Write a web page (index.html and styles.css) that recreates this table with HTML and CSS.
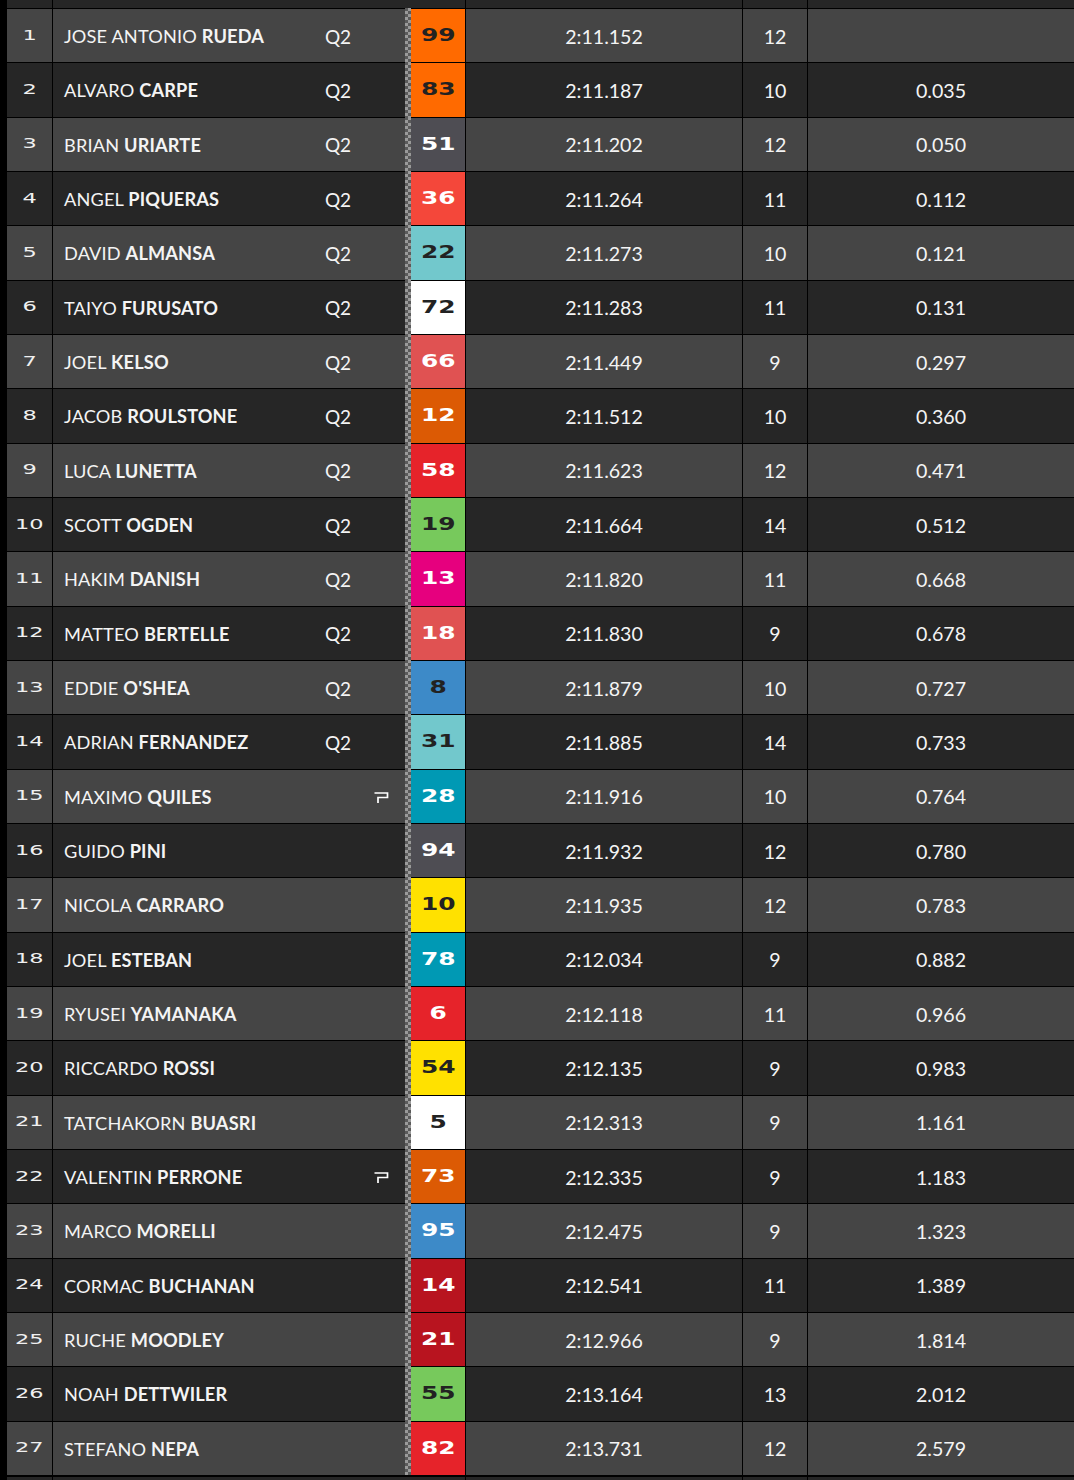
FILE: index.html
```html
<!DOCTYPE html>
<html lang="en">
<head>
<meta charset="utf-8">
<title>Timing</title>
<link rel="stylesheet" href="styles.css">
</head>
<body>
<div class="board">
  <div class="row dark top-cut"><div class="c pos"></div><div class="c name"></div><div class="c blank"></div><div class="c badge"></div><div class="c time"></div><div class="c laps"></div><div class="c gap"></div></div>

  <div class="row light"><div class="c pos"><span class="pn">1</span></div><div class="c name"><span class="nm">JOSE ANTONIO <b>RUEDA</b></span><span class="q">Q2</span><span class="pf"></span></div><div class="stripe"></div><div class="c badge orange"><span class="bn">99</span></div><div class="c time">2:11.152</div><div class="c laps">12</div><div class="c gap"></div></div>
  <div class="row dark"><div class="c pos"><span class="pn">2</span></div><div class="c name"><span class="nm">ALVARO <b>CARPE</b></span><span class="q">Q2</span><span class="pf"></span></div><div class="stripe"></div><div class="c badge orange"><span class="bn">83</span></div><div class="c time">2:11.187</div><div class="c laps">10</div><div class="c gap">0.035</div></div>
  <div class="row light"><div class="c pos"><span class="pn">3</span></div><div class="c name"><span class="nm">BRIAN <b>URIARTE</b></span><span class="q">Q2</span><span class="pf"></span></div><div class="stripe"></div><div class="c badge grey"><span class="bn">51</span></div><div class="c time">2:11.202</div><div class="c laps">12</div><div class="c gap">0.050</div></div>
  <div class="row dark"><div class="c pos"><span class="pn">4</span></div><div class="c name"><span class="nm">ANGEL <b>PIQUERAS</b></span><span class="q">Q2</span><span class="pf"></span></div><div class="stripe"></div><div class="c badge redorange"><span class="bn">36</span></div><div class="c time">2:11.264</div><div class="c laps">11</div><div class="c gap">0.112</div></div>
  <div class="row light"><div class="c pos"><span class="pn">5</span></div><div class="c name"><span class="nm">DAVID <b>ALMANSA</b></span><span class="q">Q2</span><span class="pf"></span></div><div class="stripe"></div><div class="c badge lteal"><span class="bn">22</span></div><div class="c time">2:11.273</div><div class="c laps">10</div><div class="c gap">0.121</div></div>
  <div class="row dark"><div class="c pos"><span class="pn">6</span></div><div class="c name"><span class="nm">TAIYO <b>FURUSATO</b></span><span class="q">Q2</span><span class="pf"></span></div><div class="stripe"></div><div class="c badge white"><span class="bn">72</span></div><div class="c time">2:11.283</div><div class="c laps">11</div><div class="c gap">0.131</div></div>
  <div class="row light"><div class="c pos"><span class="pn">7</span></div><div class="c name"><span class="nm">JOEL <b>KELSO</b></span><span class="q">Q2</span><span class="pf"></span></div><div class="stripe"></div><div class="c badge coral"><span class="bn">66</span></div><div class="c time">2:11.449</div><div class="c laps">9</div><div class="c gap">0.297</div></div>
  <div class="row dark"><div class="c pos"><span class="pn">8</span></div><div class="c name"><span class="nm">JACOB <b>ROULSTONE</b></span><span class="q">Q2</span><span class="pf"></span></div><div class="stripe"></div><div class="c badge dorange"><span class="bn">12</span></div><div class="c time">2:11.512</div><div class="c laps">10</div><div class="c gap">0.360</div></div>
  <div class="row light"><div class="c pos"><span class="pn">9</span></div><div class="c name"><span class="nm">LUCA <b>LUNETTA</b></span><span class="q">Q2</span><span class="pf"></span></div><div class="stripe"></div><div class="c badge red"><span class="bn">58</span></div><div class="c time">2:11.623</div><div class="c laps">12</div><div class="c gap">0.471</div></div>
  <div class="row dark"><div class="c pos"><span class="pn">10</span></div><div class="c name"><span class="nm">SCOTT <b>OGDEN</b></span><span class="q">Q2</span><span class="pf"></span></div><div class="stripe"></div><div class="c badge green"><span class="bn">19</span></div><div class="c time">2:11.664</div><div class="c laps">14</div><div class="c gap">0.512</div></div>
  <div class="row light"><div class="c pos"><span class="pn">11</span></div><div class="c name"><span class="nm">HAKIM <b>DANISH</b></span><span class="q">Q2</span><span class="pf"></span></div><div class="stripe"></div><div class="c badge magenta"><span class="bn">13</span></div><div class="c time">2:11.820</div><div class="c laps">11</div><div class="c gap">0.668</div></div>
  <div class="row dark"><div class="c pos"><span class="pn">12</span></div><div class="c name"><span class="nm">MATTEO <b>BERTELLE</b></span><span class="q">Q2</span><span class="pf"></span></div><div class="stripe"></div><div class="c badge coral"><span class="bn">18</span></div><div class="c time">2:11.830</div><div class="c laps">9</div><div class="c gap">0.678</div></div>
  <div class="row light"><div class="c pos"><span class="pn">13</span></div><div class="c name"><span class="nm">EDDIE <b>O'SHEA</b></span><span class="q">Q2</span><span class="pf"></span></div><div class="stripe"></div><div class="c badge blue dk"><span class="bn">8</span></div><div class="c time">2:11.879</div><div class="c laps">10</div><div class="c gap">0.727</div></div>
  <div class="row dark"><div class="c pos"><span class="pn">14</span></div><div class="c name"><span class="nm">ADRIAN <b>FERNANDEZ</b></span><span class="q">Q2</span><span class="pf"></span></div><div class="stripe"></div><div class="c badge lteal"><span class="bn">31</span></div><div class="c time">2:11.885</div><div class="c laps">14</div><div class="c gap">0.733</div></div>
  <div class="row light"><div class="c pos"><span class="pn">15</span></div><div class="c name"><span class="nm">MAXIMO <b>QUILES</b></span><span class="q"></span><span class="pf"><svg class="picon" width="15" height="11" viewBox="0 0 15 11"><path d="M4 11 V5.5 H13.5 V1 H0.5" fill="none" stroke="#fff" stroke-width="1.7"/></svg></span></div><div class="stripe"></div><div class="c badge teal"><span class="bn">28</span></div><div class="c time">2:11.916</div><div class="c laps">10</div><div class="c gap">0.764</div></div>
  <div class="row dark"><div class="c pos"><span class="pn">16</span></div><div class="c name"><span class="nm">GUIDO <b>PINI</b></span><span class="q"></span><span class="pf"></span></div><div class="stripe"></div><div class="c badge grey"><span class="bn">94</span></div><div class="c time">2:11.932</div><div class="c laps">12</div><div class="c gap">0.780</div></div>
  <div class="row light"><div class="c pos"><span class="pn">17</span></div><div class="c name"><span class="nm">NICOLA <b>CARRARO</b></span><span class="q"></span><span class="pf"></span></div><div class="stripe"></div><div class="c badge yellow"><span class="bn">10</span></div><div class="c time">2:11.935</div><div class="c laps">12</div><div class="c gap">0.783</div></div>
  <div class="row dark"><div class="c pos"><span class="pn">18</span></div><div class="c name"><span class="nm">JOEL <b>ESTEBAN</b></span><span class="q"></span><span class="pf"></span></div><div class="stripe"></div><div class="c badge teal"><span class="bn">78</span></div><div class="c time">2:12.034</div><div class="c laps">9</div><div class="c gap">0.882</div></div>
  <div class="row light"><div class="c pos"><span class="pn">19</span></div><div class="c name"><span class="nm">RYUSEI <b>YAMANAKA</b></span><span class="q"></span><span class="pf"></span></div><div class="stripe"></div><div class="c badge red"><span class="bn">6</span></div><div class="c time">2:12.118</div><div class="c laps">11</div><div class="c gap">0.966</div></div>
  <div class="row dark"><div class="c pos"><span class="pn">20</span></div><div class="c name"><span class="nm">RICCARDO <b>ROSSI</b></span><span class="q"></span><span class="pf"></span></div><div class="stripe"></div><div class="c badge yellow"><span class="bn">54</span></div><div class="c time">2:12.135</div><div class="c laps">9</div><div class="c gap">0.983</div></div>
  <div class="row light"><div class="c pos"><span class="pn">21</span></div><div class="c name"><span class="nm">TATCHAKORN <b>BUASRI</b></span><span class="q"></span><span class="pf"></span></div><div class="stripe"></div><div class="c badge white"><span class="bn">5</span></div><div class="c time">2:12.313</div><div class="c laps">9</div><div class="c gap">1.161</div></div>
  <div class="row dark"><div class="c pos"><span class="pn">22</span></div><div class="c name"><span class="nm">VALENTIN <b>PERRONE</b></span><span class="q"></span><span class="pf"><svg class="picon" width="15" height="11" viewBox="0 0 15 11"><path d="M4 11 V5.5 H13.5 V1 H0.5" fill="none" stroke="#fff" stroke-width="1.7"/></svg></span></div><div class="stripe"></div><div class="c badge dorange"><span class="bn">73</span></div><div class="c time">2:12.335</div><div class="c laps">9</div><div class="c gap">1.183</div></div>
  <div class="row light"><div class="c pos"><span class="pn">23</span></div><div class="c name"><span class="nm">MARCO <b>MORELLI</b></span><span class="q"></span><span class="pf"></span></div><div class="stripe"></div><div class="c badge blue"><span class="bn">95</span></div><div class="c time">2:12.475</div><div class="c laps">9</div><div class="c gap">1.323</div></div>
  <div class="row dark"><div class="c pos"><span class="pn">24</span></div><div class="c name"><span class="nm">CORMAC <b>BUCHANAN</b></span><span class="q"></span><span class="pf"></span></div><div class="stripe"></div><div class="c badge dred"><span class="bn">14</span></div><div class="c time">2:12.541</div><div class="c laps">11</div><div class="c gap">1.389</div></div>
  <div class="row light"><div class="c pos"><span class="pn">25</span></div><div class="c name"><span class="nm">RUCHE <b>MOODLEY</b></span><span class="q"></span><span class="pf"></span></div><div class="stripe"></div><div class="c badge dred"><span class="bn">21</span></div><div class="c time">2:12.966</div><div class="c laps">9</div><div class="c gap">1.814</div></div>
  <div class="row dark"><div class="c pos"><span class="pn">26</span></div><div class="c name"><span class="nm">NOAH <b>DETTWILER</b></span><span class="q"></span><span class="pf"></span></div><div class="stripe"></div><div class="c badge green"><span class="bn">55</span></div><div class="c time">2:13.164</div><div class="c laps">13</div><div class="c gap">2.012</div></div>
  <div class="row light"><div class="c pos"><span class="pn">27</span></div><div class="c name"><span class="nm">STEFANO <b>NEPA</b></span><span class="q"></span><span class="pf"></span></div><div class="stripe"></div><div class="c badge red"><span class="bn">82</span></div><div class="c time">2:13.731</div><div class="c laps">12</div><div class="c gap">2.579</div></div>

  <div class="row dark end"><div class="c pos"></div><div class="c name"></div><div class="c blank"></div><div class="c badge"></div><div class="c time"></div><div class="c laps"></div><div class="c gap"></div></div>
</div>
</body>
</html>
```

FILE: styles.css
```css
html, body {
  margin: 0;
  padding: 0;
  background: #000;
}
body {
  height: 1480px;
  overflow: hidden;
  font-family: "Lato", "Open Sans", "Liberation Sans", sans-serif;
  color: #f4f4f4;
}
.board {
  padding-left: 7px;
  display: flex;
  flex-direction: column;
}
.row {
  display: grid;
  grid-template-columns: 45px 353px 6px 54px 277px 65px 267px;
  height: 54.333px;
}
.row.top-cut { height: 8px; }
.row.end { height: 40px; }
.row.end .c { border-top-width: 2px; }
.light { background: #454545; }
.dark { background: #262626; }
.c {
  box-sizing: border-box;
  border-top: 1px solid #000;
  display: flex;
  align-items: center;
  justify-content: center;
  min-width: 0;
}
.top-cut .c { border-top: none; }
.name, .time, .laps, .gap { border-left: 1px solid #000; }
.name {
  justify-content: flex-start;
  padding-left: 11px;
  font-size: 18.2px;
  letter-spacing: 0.15px;
  padding-top: 1px;
}
.nm { flex: 1; white-space: nowrap; }
.nm b { font-weight: 700; }
.q {
  width: 40px;
  text-align: center;
  font-size: 19px;
  letter-spacing: 0;
}
.pf {
  width: 45px;
  margin-right: 2px;
  display: flex;
  justify-content: center;
  align-items: center;
}
.picon { display: block; margin-top: 1px; margin-left: 1px; }
.stripe {
  background: repeating-conic-gradient(#9a9a9a 0 25%, #5a5a5a 0 50%) 0 0 / 6px 6px;
}
.top-cut .stripe, .end .stripe { background: none; }
.pn {
  display: inline-block;
  font-family: "DejaVu Sans", sans-serif;
  font-size: 14.5px;
  transform: scaleX(1.55);
  margin-top: -2px;
  color: #f0f0f0;
}
.badge { color: #fff; }
.bn {
  display: inline-block;
  font-family: "DejaVu Sans", sans-serif;
  font-weight: 700;
  font-size: 17.5px;
  transform: scaleX(1.42);
  margin-top: -1px;
}
.time, .laps, .gap {
  font-size: 19.6px;
  padding-top: 1px;
}
.orange { background: #ff6a00; color: #222; }
.grey { background: #4e4d53; }
.redorange { background: #f4473a; }
.lteal { background: #72c8cc; color: #222; }
.white { background: #fff; color: #222; }
.coral { background: #e05252; }
.dorange { background: #dc5a04; }
.red { background: #e6232a; }
.green { background: #77c95c; color: #222; }
.magenta { background: #e6007e; }
.blue { background: #3d8ac8; }
.blue.dk { color: #222; }
.teal { background: #0099b4; }
.yellow { background: #ffe100; color: #222; }
.dred { background: #b8141f; }
```
